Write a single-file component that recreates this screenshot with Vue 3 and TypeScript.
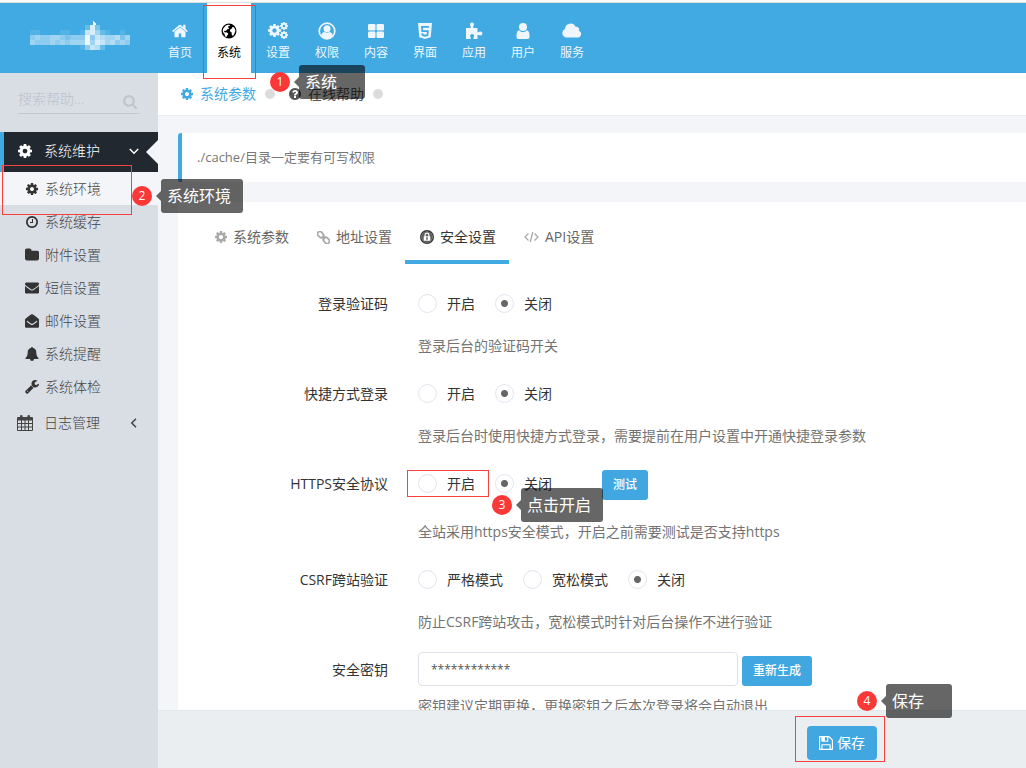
<script setup lang="ts">
import { reactive, ref } from 'vue'

interface NavItem { label: string; icon: string }
interface Choice { value: string; label: string }
interface Field {
  key: string
  label: string
  choices: Choice[]
  help: string
  testable?: boolean
}

const nav: NavItem[] = [
  { label: '首页', icon: 'home' },
  { label: '系统', icon: 'globe' },
  { label: '设置', icon: 'cogs' },
  { label: '权限', icon: 'user-circle' },
  { label: '内容', icon: 'th' },
  { label: '界面', icon: 'html5' },
  { label: '应用', icon: 'puzzle' },
  { label: '用户', icon: 'user' },
  { label: '服务', icon: 'cloud' },
]

const submenu: NavItem[] = [
  { label: '系统环境', icon: 'cog' },
  { label: '系统缓存', icon: 'clock' },
  { label: '附件设置', icon: 'folder' },
  { label: '短信设置', icon: 'envelope' },
  { label: '邮件设置', icon: 'envelope-open' },
  { label: '系统提醒', icon: 'bell' },
  { label: '系统体检', icon: 'wrench' },
]

const tabs: NavItem[] = [
  { label: '系统参数', icon: 'cog' },
  { label: '地址设置', icon: 'link' },
  { label: '安全设置', icon: 'lock' },
  { label: 'API设置', icon: 'code' },
]

const onOff: Choice[] = [
  { value: 'on', label: '开启' },
  { value: 'off', label: '关闭' },
]

const fields: Field[] = [
  { key: 'captcha', label: '登录验证码', choices: onOff, help: '登录后台的验证码开关' },
  { key: 'quick', label: '快捷方式登录', choices: onOff, help: '登录后台时使用快捷方式登录，需要提前在用户设置中开通快捷登录参数' },
  { key: 'https', label: 'HTTPS安全协议', choices: onOff, help: '全站采用https安全模式，开启之前需要测试是否支持https', testable: true },
  {
    key: 'csrf',
    label: 'CSRF跨站验证',
    choices: [
      { value: 'strict', label: '严格模式' },
      { value: 'loose', label: '宽松模式' },
      { value: 'off', label: '关闭' },
    ],
    help: '防止CSRF跨站攻击，宽松模式时针对后台操作不进行验证',
  },
]

const values = reactive<Record<string, string>>({ captcha: 'off', quick: 'off', https: 'off', csrf: 'off' })
const secret = ref('************')
const activeTab = ref(2)

// Opacity of each mosaic cell, in tenths, row by row.
const mosaic: string[] = [
  '00000000000283000000',
  '11000011001785210010',
  '45445543444947655635',
  '54445454555958756454',
  '00000000001476200000',
]
</script>

<template>
  <div class="page">
    <svg class="sprite" aria-hidden="true">
      <symbol id="cog" viewBox="128 128 1536 1536"><path d="M1152 896q0-106-75-181t-181-75-181 75-75 181 75 181 181 75 181-75 75-181zm512-109v222q0 12-8 23t-20 13l-185 28q-19 54-39 91 35 50 107 138 10 12 10 25t-9 23q-27 37-99 108t-94 71q-12 0-26-9l-138-108q-44 23-91 38-16 136-29 186-7 28-36 28h-222q-14 0-24.5-8.5t-11.5-21.5l-28-184q-49-16-90-37l-141 107q-10 9-25 9-14 0-25-11-126-114-165-168-7-10-7-23 0-12 8-23 15-21 51-66.5t54-70.5q-27-50-41-99l-183-27q-13-2-21-12.5t-8-23.500v-222q0-12 8-23t19-13l186-28q14-46 39-92-40-57-107-138-10-12-10-24 0-10 9-23 26-36 98.5-107.5t94.5-71.5q13 0 26 10l138 107q44-23 91-38 16-136 29-186 7-28 36-28h222q14 0 24.5 8.5t11.5 21.500l28 184q49 16 90 37l142-107q9-9 24-9 13 0 25 10 129 119 165 170 7 8 7 22 0 12-8 23-15 21-51 66.500t-54 70.500q26 50 41 98l183 28q13 2 21 12.5t8 23.5z" /></symbol>
      <symbol id="home" viewBox="64 128 1664 1536"><path d="M1472 992v480q0 26-19 45t-45 19h-384v-384h-256v384h-384q-26 0-45-19t-19-45v-480q0-1 .5-3t.5-3l575-474 575 474q1 2 1 6zm223-69l-62 74q-8 9-21 11h-3q-13 0-21-7l-692-577-692 577q-12 8-24 7-13-2-21-11l-62-74q-8-10-7-23.5t11-21.500l719-599q32-26 76-26t76 26l244 204v-195q0-14 9-23t23-9h192q14 0 23 9t9 23v408l219 182q10 8 11 21.500t-7 23.500z" /></symbol>
      <symbol id="globe" viewBox="0 0 18 18"><path fill-rule="evenodd" d="M9 1.500a7.500 7.500 0 1 0 0 15a7.500 7.500 0 0 0 0-15zM5.800 3.600L8 2.700L10 3.100L9.600 4L8.300 4.300L8 5.300L9 6L8.600 7L7.200 7.300L6.300 8.600L5.200 9L4.600 8.500L4 9.500L5 10.400L6.600 10.200L8.200 11.600L7.800 13L6.800 13.800L6.400 15.300L5 14.300L4.600 12L3.200 10.600L2.700 8.500L3.400 6.200zM12 5.300L13.600 5L15 7L15.400 9L14.500 11.200L13.300 13.500L12.300 13.800L11.600 12L11.800 10.600L10.500 9.900L9.900 8.400L10.700 7L12.200 6.500z" /></symbol>
      <symbol id="cogs" viewBox="0 0 20 18">
        <use href="#cog" x="0" y="2" width="13" height="13" />
        <use href="#cog" x="12" y="0" width="8" height="8" />
        <use href="#cog" x="12" y="9" width="8" height="8" />
      </symbol>
      <symbol id="user-circle" viewBox="0 0 18 18"><circle cx="9" cy="9" r="7.800" fill="none" stroke="currentColor" stroke-width="1.700" /><circle cx="9" cy="6.800" r="3.500" /><path d="M3.200 14c.4-3 1.900-4 3.300-4q2.500 1.500 5 0c1.400 0 2.900 1 3.300 4a7.600 7.600 0 0 1-11.600 0z" /></symbol>
      <symbol id="th" viewBox="0 0 18 18"><rect x="1" y="2" width="7.500" height="6.500" rx="1.200" /><rect x="9.500" y="2" width="7.500" height="6.500" rx="1.200" /><rect x="1" y="9.500" width="7.500" height="6.500" rx="1.200" /><rect x="9.500" y="9.500" width="7.500" height="6.500" rx="1.200" /></symbol>
      <symbol id="html5" viewBox="0 0 18 18"><path fill-rule="evenodd" d="M2 1h14l-1.300 14.200L9 17l-5.700-1.800zM5 4l.5 6h5.400l-.2 2.300l-1.700.5l-1.700-.5l-.1-1H5.500l.2 2.400l3.300 1l3.300-1l.5-5.500H7.200L7 5.700h6L13.200 4z" /></symbol>
      <symbol id="puzzle" viewBox="0 0 18 18"><path d="M1 6h4.700V4.500A2.200 2.200 0 0 1 5 2.500a2 2 0 0 1 4 0c0 .9-.7 1.200-.7 2V6h4.200v4.200h1.200c.6 0 .9-.7 1.700-.7a2 2 0 0 1 0 4.100c-.8 0-1.100-.7-1.700-.7h-1.200V17H8.500v-1.500c0-.7.8-1 .8-1.800a2.200 2.200 0 0 0-4.300 0c0 .8.7 1.100.7 1.800V17H1z" /></symbol>
      <symbol id="user" viewBox="0 0 18 18"><circle cx="9" cy="5" r="4" /><path d="M5 8.300Q9 12 13 8.300c2 .5 2.500 3 2.500 6A2.300 2.300 0 0 1 13.200 17H4.800A2.300 2.300 0 0 1 2.500 14.300c0-3 .5-5.500 2.500-6z" /></symbol>
      <symbol id="cloud" viewBox="0 0 20 18"><path d="M5 15.500a4.500 4.500 0 0 1-2-8.600A5.500 5.500 0 0 1 13.500 4.800a3 3 0 0 1 3.500 4a3.500 3.500 0 0 1-1 6.700z" /></symbol>
      <symbol id="search" viewBox="64 128 1664 1664"><path d="M1216 832q0-185-131.500-316.500t-316.500-131.500-316.500 131.500-131.500 316.500 131.500 316.500 316.500 131.500 316.500-131.500 131.500-316.500zm512 832q0 52-38 90t-90 38q-54 0-90-38l-343-342q-179 124-399 124-143 0-273.500-55.500t-225-150-150-225-55.500-273.500 55.500-273.500 150-225 225-150 273.500-55.500 273.500 55.500 225 150 150 225 55.500 273.500q0 220-124 399l343 343q37 37 37 90z" /></symbol>
      <symbol id="question" viewBox="128 128 1536 1536"><path d="M1024 1376v-192q0-14-9-23t-23-9h-192q-14 0-23 9t-9 23v192q0 14 9 23t23 9h192q14 0 23-9t9-23zm256-672q0-88-55.500-163t-138.500-116-170-41q-243 0-371 213-15 24 8 42l132 100q7 6 19 6 16 0 25-12 53-68 86-92 34-24 86-24 48 0 85.500 26t37.500 59q0 38-20 61t-68 45q-63 28-115.500 86.500t-52.500 125.500v36q0 14 9 23t23 9h192q14 0 23-9t9-23q0-19 21.500-49.500t54.500-49.500q32-18 49-28.500t46-35 44.500-48 28-60.500 12.500-81zm384 192q0 209-103 385.500t-279.500 279.500-385.500 103-385.500-103-279.500-279.500-103-385.500 103-385.500 279.500-279.500 385.500-103 385.500 103 279.500 279.500 103 385.500z" /></symbol>
      <symbol id="clock" viewBox="128 128 1536 1536"><path d="M1024 544v448q0 14-9 23t-23 9h-320q-14 0-23-9t-9-23v-64q0-14 9-23t23-9h224v-352q0-14 9-23t23-9h64q14 0 23 9t9 23zm416 352q0-148-73-273t-198-198-273-73-273 73-198 198-73 273 73 273 198 198 273 73 273-73 198-198 73-273zm224 0q0 209-103 385.500t-279.500 279.500-385.500 103-385.500-103-279.500-279.500-103-385.500 103-385.500 279.500-279.500 385.500-103 385.500 103 279.500 279.500 103 385.500z" /></symbol>
      <symbol id="folder" viewBox="64 64 1664 1664"><path d="M1728 608v704q0 92-66 158t-158 66h-1216q-92 0-158-66t-66-158v-960q0-92 66-158t158-66h320q92 0 158 66t66 158v32h672q92 0 158 66t66 158z" /></symbol>
      <symbol id="envelope" viewBox="0 64 1792 1792"><path d="M1792 710v794q0 66-47 113t-113 47h-1472q-66 0-113-47t-47-113v-794q44 49 101 87 362 246 497 345 57 42 92.500 65.500t94.500 48 110 24.500h2q51 0 110-24.500t94.500-48 92.500-65.500q170-123 498-345 57-39 100-87zm0-294q0 79-49 151t-122 123q-376 261-468 325-10 7-42.500 31t-54 38.500-52 32.500-57.500 27-50 9h-2q-23 0-50-9t-57.500-27-52-32.500-54-38.500-42.500-31q-91-64-262-182.500t-205-142.500q-62-42-117-115.500t-55-136.500q0-78 41.500-130t118.500-52h1472q65 0 112.500 47t47.500 113z" /></symbol>
      <symbol id="envelope-open" viewBox="0 0 14 14"><path fill-rule="evenodd" d="M0 5.300Q3 2.500 6 .5Q7-.2 8 .5Q11 2.500 14 5.300V12.500A1.300 1.300 0 0 1 12.700 13.800H1.300A1.300 1.300 0 0 1 0 12.500zM2.300 6.700L1.600 7.700L5.500 10.600Q7 11.600 8.500 10.600L12.400 7.700L11.700 6.700L8 9.400Q7 10 6 9.400z" /></symbol>
      <symbol id="bell" viewBox="0 0 14 14"><path d="M7 0a1 1 0 0 1 1 1.100c2.200.5 3.300 2.200 3.300 4.300c0 3 1 4.500 2.400 5.600q0 1-1 1H9a2 2 0 0 1-4 0H1.300q-1 0-1-1C1.700 9.900 2.700 8.400 2.700 5.400C2.700 3.300 3.800 1.600 6 1.100A1 1 0 0 1 7 0z" /></symbol>
      <symbol id="wrench" viewBox="64 128 1664 1664"><path d="M448 1472q0-26-19-45t-45-19-45 19-19 45 19 45 45 19 45-19 19-45zm644-420l-682 682q-37 37-90 37-52 0-91-37l-106-108q-38-36-38-90 0-53 38-91l681-681q39 98 114.500 173.500t173.500 114.500zm634-435q0 39-23 106-47 134-164.500 217.500t-258.500 83.500q-185 0-316.500-131.500t-131.500-316.500 131.500-316.500 316.500-131.500q58 0 121.500 16.500t107.500 46.500q16 11 16 28t-16 28l-293 169v224l193 107q5-3 79-48.500t135.500-81 70.500-35.500q15 0 23.500 10t8.500 25z" /></symbol>
      <symbol id="calendar" viewBox="0 0 16 17"><path fill-rule="evenodd" d="M1 2H3V1.300a1.300 1.300 0 0 1 2.600 0V2h4.800V1.300a1.300 1.300 0 0 1 2.600 0V2h2a1 1 0 0 1 1 1V15a1 1 0 0 1-1 1H1a1 1 0 0 1-1-1V3a1 1 0 0 1 1-1zM1 5.500V8H4V5.500zM5 5.500V8H7.500V5.500zM8.500 5.500V8H11V5.500zM12 5.500V8H15V5.500zM1 9V11.500H4V9zM5 9V11.500H7.500V9zM8.500 9V11.500H11V9zM12 9V11.500H15V9zM1 12.500V15H4V12.500zM5 12.500V15H7.500V12.500zM8.500 12.500V15H11V12.500zM12 12.500V15H15V12.500z" /></symbol>
      <symbol id="link" viewBox="0 0 14 14"><g fill="none" stroke="currentColor" stroke-width="1.900" transform="rotate(45 7 7)"><rect x="-1" y="4.500" width="7.300" height="5" rx="2.500" /><rect x="7.700" y="4.500" width="7.300" height="5" rx="2.500" /><path d="M4.500 7h5" /></g></symbol>
      <symbol id="lock" viewBox="0 0 14 14"><circle cx="7" cy="7" r="6.300" fill="none" stroke="currentColor" stroke-width="1.400" /><circle cx="7" cy="7" r="5.500" opacity="0.800" /><path fill="none" stroke="#fff" stroke-width="1.200" d="M5.100 6.500V5a1.900 1.900 0 0 1 3.800 0V6.500" /><rect x="3.700" y="6.200" width="6.600" height="4.500" rx="0.500" fill="#fff" /><path stroke="currentColor" stroke-width="1.200" d="M7 7.200V9.700" /></symbol>
      <symbol id="code" viewBox="0 0 15 14"><path fill="none" stroke="currentColor" stroke-width="1.300" d="M4.500 3.500L1 7L4.500 10.500M10.500 3.500L14 7L10.500 10.500M8.800 2L6.200 12" /></symbol>
      <symbol id="save" viewBox="128 128 1536 1536"><path d="M512 1536h768v-384h-768v384zm896 0h128v-896q0-14-10-38.500t-20-34.500l-281-281q-10-10-34-20t-39-10v416q0 40-28 68t-68 28h-576q-40 0-68-28t-28-68v-416h-128v1280h128v-416q0-40 28-68t68-28h832q40 0 68 28t28 68v416zm-384-928v-320q0-13-9.500-22.500t-22.500-9.500h-192q-13 0-22.500 9.500t-9.500 22.500v320q0 13 9.500 22.500t22.500 9.500h192q13 0 22.500-9.500t9.500-22.500zm640 32v928q0 40-28 68t-68 28h-1344q-40 0-68-28t-28-68v-1344q0-40 28-68t68-28h928q40 0 88 20t76 48l280 280q28 28 48 76t20 88z" /></symbol>
      <symbol id="chevron" viewBox="0 0 10 10"><path fill="none" stroke="currentColor" stroke-width="1.500" d="M0.800 3L5 7.200L9.200 3" /></symbol>
    </svg>

    <header class="header">
      <a class="logo" href="#" aria-label="logo">
        <svg viewBox="0 -5 100 30" width="100" height="30" shape-rendering="crispEdges">
          <path fill="#fff" opacity="0.900" d="M63 0V-4L66 -2V0z" />
          <template v-for="(row, y) in mosaic" :key="y">
            <rect v-for="(cell, x) in row.split('')" :key="x" :x="x * 5" :y="y * 5" width="5" height="5" fill="#fff" :opacity="Number(cell) / 10" />
          </template>
        </svg>
      </a>
      <nav class="nav">
        <a v-for="item in nav" :key="item.label" href="#" class="nav-item" :class="{ active: item.icon === 'globe' }">
          <svg class="nav-icon" :class="item.icon"><use :href="'#' + item.icon" /></svg>
          <span>{{ item.label }}</span>
          <template v-if="item.icon === 'globe'">
            <span class="frame frame-nav"></span>
            <span class="callout callout-nav"><b class="badge">1</b><span class="tip">系统</span></span>
          </template>
        </a>
      </nav>
    </header>

    <div class="body">
      <aside class="sidebar">
        <form class="search" @submit.prevent>
          <input type="text" placeholder="搜索帮助..." aria-label="搜索帮助" />
          <button type="submit" aria-label="搜索"><svg><use href="#search" /></svg></button>
        </form>
        <a class="group open" href="#">
          <svg class="group-icon"><use href="#cog" /></svg>
          <span>系统维护</span>
          <svg class="chevron"><use href="#chevron" /></svg>
        </a>
        <ul class="submenu">
          <li v-for="(item, i) in submenu" :key="item.label" :class="{ current: i === 0 }">
            <a href="#"><svg class="sub-icon" :class="item.icon"><use :href="'#' + item.icon" /></svg><span>{{ item.label }}</span></a>
            <template v-if="i === 0">
              <span class="frame frame-menu"></span>
              <span class="callout callout-menu"><b class="badge">2</b><span class="tip">系统环境</span></span>
            </template>
          </li>
        </ul>
        <a class="group" href="#">
          <svg class="group-icon calendar"><use href="#calendar" /></svg>
          <span>日志管理</span>
          <svg class="chevron left"><use href="#chevron" /></svg>
        </a>
      </aside>

      <main class="main">
        <nav class="crumbs">
          <a href="#" class="crumb active"><svg><use href="#cog" /></svg>系统参数</a>
          <i class="dot"></i>
          <a href="#" class="crumb"><svg><use href="#question" /></svg>在线帮助</a>
          <i class="dot"></i>
        </nav>
        <div class="content">
          <p class="notice">./cache/目录一定要有可写权限</p>
          <section class="card">
            <div class="tabs" role="tablist">
              <button
                v-for="(tab, i) in tabs"
                :key="tab.label"
                type="button"
                role="tab"
                class="tab"
                :class="[tab.icon, { active: activeTab === i }]"
                @click="activeTab = i"
              >
                <svg><use :href="'#' + tab.icon" /></svg>{{ tab.label }}
              </button>
            </div>
            <form class="form" @submit.prevent>
              <div v-for="field in fields" :key="field.key" class="row">
                <span :id="'label-' + field.key" class="label">{{ field.label }}</span>
                <div class="field">
                  <div class="control" :class="{ tall: field.testable }" role="radiogroup" :aria-labelledby="'label-' + field.key">
                    <label v-for="choice in field.choices" :key="choice.value" class="choice">
                      <input v-model="values[field.key]" type="radio" :name="field.key" :value="choice.value" />
                      <span>{{ choice.label }}</span>
                      <template v-if="field.testable && choice.value === 'on'">
                        <span class="frame frame-radio"></span>
                        <span class="callout callout-radio"><b class="badge">3</b><span class="tip">点击开启</span></span>
                      </template>
                    </label>
                    <button v-if="field.testable" type="button" class="small-button test">测试</button>
                  </div>
                  <p class="help">{{ field.help }}</p>
                </div>
              </div>
              <div class="row">
                <label class="label" for="secret">安全密钥</label>
                <div class="field">
                  <div class="control secret">
                    <input id="secret" v-model="secret" type="text" class="text-input" />
                    <button type="button" class="small-button">重新生成</button>
                  </div>
                  <p class="help">密钥建议定期更换，更换密钥之后本次登录将会自动退出</p>
                </div>
              </div>
            </form>
          </section>
        </div>
        <footer class="footer">
          <div class="save-wrap">
            <button type="submit" class="save"><svg><use href="#save" /></svg>保存</button>
            <span class="frame frame-save"></span>
            <span class="callout callout-save"><b class="badge">4</b><span class="tip">保存</span></span>
          </div>
        </footer>
      </main>
    </div>
  </div>
</template>

<style>
body {
  margin: 0;
  overflow: hidden;
}
</style>

<style scoped>
* {
  box-sizing: border-box;
}
.page {
  display: flex;
  flex-direction: column;
  height: 100vh;
  border-top: 2px solid #fff;
  background: #f4f5f8;
  color: #333;
  font: 14px/20px "Open Sans", "Noto Sans CJK SC", sans-serif;
}
.page svg {
  display: block;
  flex: none;
  fill: currentColor;
}
.page .sprite {
  position: absolute;
  width: 0;
  height: 0;
}
a {
  color: inherit;
  text-decoration: none;
}
button,
input {
  margin: 0;
  font: inherit;
}
p {
  margin: 0;
}
.header {
  display: flex;
  position: relative;
  z-index: 3;
  flex: none;
  height: 71px;
  border-top: 1px solid #dcdcdc;
  background: #41aae3;
}
.logo {
  display: flex;
  flex: none;
  width: 158px;
  padding: 17px 0 0 30px;
}
.nav {
  display: flex;
  gap: 5px;
}
.nav-item {
  display: flex;
  position: relative;
  flex-direction: column;
  align-items: center;
  gap: 3px;
  width: 44px;
  padding-top: 19px;
  color: #f0f6fd;
  font-size: 12px;
}
.nav-item.active {
  background: #fff;
  color: #000;
}
.nav-icon {
  width: 20px;
  height: 18px;
}
.nav-icon.home {
  width: 16px;
}
.body {
  display: flex;
  flex: 1;
  min-height: 0;
}
.sidebar {
  position: relative;
  z-index: 2;
  flex: none;
  width: 158px;
  background: #d9dde4;
}
.search {
  display: flex;
  align-items: center;
  margin: 13px 18px 18px;
  height: 28px;
  border-bottom: 1px solid #c3c9d2;
}
.search input {
  flex: 1;
  min-width: 0;
  height: 27px;
  padding: 0 0 2px;
  border: 0;
  outline: 0;
  background: none;
  color: #333;
  font-weight: 300;
}
.search input::placeholder {
  color: #bac1cb;
}
.search button {
  padding: 4px 3px 0 0;
  border: 0;
  background: none;
  color: #bfc6cf;
}
.search svg {
  width: 14px;
  height: 14px;
}
.group {
  display: flex;
  position: relative;
  align-items: center;
  height: 40px;
  padding: 0 19px 0 17px;
  color: #444;
  font-weight: 300;
}
.group span {
  flex: 1;
}
.group-icon {
  width: 14px;
  height: 14px;
  margin-right: 12px;
}
.group-icon.calendar {
  width: 16px;
  height: 17px;
  margin-right: 11px;
}
.group.open {
  padding: 0 19px 2px 14px;
  border-left: 4px solid #41aae3;
  background: #22282f;
  color: #fff;
}
.group.open::after {
  position: absolute;
  top: 8px;
  right: 0;
  border: 12px solid transparent;
  border-right-color: #f4f5f8;
  border-left-width: 0;
  content: "";
}
.chevron {
  width: 10px;
  height: 10px;
}
.chevron.left {
  transform: rotate(90deg);
}
.submenu {
  margin: 0;
  padding: 0;
  list-style: none;
  color: #444;
  font-weight: 300;
}
.submenu li {
  position: relative;
}
.submenu li.current {
  background: #f4f5f8;
}
.submenu a {
  display: flex;
  align-items: center;
  gap: 6px;
  height: 33px;
  padding-left: 25px;
}
.sub-icon {
  width: 14px;
  height: 14px;
  color: #333;
}
.sub-icon.cog,
.sub-icon.clock {
  width: 12px;
  height: 12px;
  margin: 0 1px;
}
.main {
  display: flex;
  flex: 1;
  flex-direction: column;
  min-width: 0;
}
.crumbs {
  display: flex;
  flex: none;
  align-items: center;
  height: 43px;
  padding-left: 23px;
  border-bottom: 1px solid #e7ecf1;
  background: #fff;
}
.crumb {
  display: flex;
  align-items: center;
  gap: 7px;
  color: #555;
}
.crumb svg {
  width: 12px;
  height: 12px;
}
.crumb.active {
  color: #41aae3;
}
.dot {
  width: 10px;
  height: 10px;
  margin: 0 14px 0 9px;
  border-radius: 50%;
  background: #dcdcdc;
}
.content {
  flex: 1;
  min-height: 0;
  overflow: hidden;
  padding: 17px 0 0 20px;
}
.notice {
  padding: 14px 15px 15px;
  border-left: 4px solid #41aae3;
  border-radius: 3px 0 0 3px;
  background: #fff;
  color: #777;
  font-size: 13px;
}
.card {
  margin-top: 20px;
  padding: 12px 0 20px;
  background: #fff;
}
.tabs {
  display: flex;
  padding-left: 22px;
}
.tab {
  display: flex;
  align-items: center;
  gap: 6px;
  height: 50px;
  padding: 0 13px 0 15px;
  border: 0;
  border-bottom: 4px solid transparent;
  background: none;
  color: #666;
}
.tab svg {
  width: 12px;
  height: 12px;
  color: #aaa;
}
.tab.link svg {
  width: 13px;
  height: 13px;
}
.tab.lock svg {
  width: 14px;
  height: 14px;
}
.tab.code svg {
  width: 15px;
  height: 14px;
}
.tab.active {
  border-bottom-color: #41aae3;
  color: #333;
}
.tab.active svg {
  color: #333;
}
.form {
  padding-top: 23px;
}
.row {
  display: grid;
  grid-template-columns: 210px 1fr;
  gap: 30px;
  margin-bottom: 21px;
}
.label {
  line-height: 33px;
  text-align: right;
}
.control {
  display: flex;
  align-items: flex-start;
  gap: 20px;
  height: 34px;
  margin-bottom: 15px;
}
.control.tall {
  height: 40px;
}
.control.secret {
  height: 33px;
  align-items: flex-end;
  gap: 4px;
  margin-bottom: 10px;
}
.choice {
  display: flex;
  position: relative;
  align-items: center;
  gap: 10px;
  height: 33px;
}
.choice input {
  width: 19px;
  height: 19px;
  border: 1px solid #e4e4f0;
  border-radius: 50%;
  appearance: none;
  background: #fff;
}
.choice input:checked {
  background: radial-gradient(circle, #666 0 3px, #fff 4px);
}
.small-button {
  height: 30px;
  padding: 0 11px;
  border: 0;
  border-radius: 3px;
  background: #41a7e1;
  color: #fff;
  font-size: 12px;
  font-weight: 500;
}
.small-button.test {
  margin: 3px 0 0 30px;
}
.help {
  color: #737373;
}
.text-input {
  width: 320px;
  height: 34px;
  padding: 0 12px;
  border: 1px solid #e1e1ee;
  border-radius: 4px;
  background: #fff;
  color: #555;
  font-size: 12px;
}
.footer {
  display: flex;
  flex: none;
  align-items: flex-start;
  position: relative;
  height: 58px;
  padding: 15px 0 0 649px;
  border-top: 1px solid #e3e8ec;
  background: #ebeef0;
}
.save-wrap {
  position: relative;
}
.save {
  display: flex;
  align-items: center;
  gap: 4px;
  height: 34px;
  padding: 0 12px;
  border: 0;
  border-radius: 4px;
  background: #41a7e1;
  color: #fff;
}
.save svg {
  width: 14px;
  height: 14px;
}
.frame {
  position: absolute;
  border: 1px solid #f8403f;
  pointer-events: none;
}
.frame-nav {
  inset: 2px -5px -6px -4px;
}
.frame-menu {
  inset: -7px 26px -10px 2px;
}
.frame-radio {
  inset: 3px -14px 3px -11px;
}
.frame-save {
  inset: -10px -8px -2px -12px;
}
.callout {
  display: flex;
  position: absolute;
  align-items: center;
  gap: 9px;
}
.callout-nav {
  top: 62px;
  left: 63px;
}
.callout-menu {
  top: 7px;
  left: 132px;
}
.callout-radio {
  z-index: 1;
  top: 21px;
  left: 74px;
}
.callout-save {
  top: -42px;
  left: 50px;
}
.badge {
  width: 20px;
  height: 20px;
  border-radius: 50%;
  background: #fb3838;
  color: #fff;
  font-size: 12px;
  font-weight: 400;
  line-height: 20px;
  text-align: center;
}
.tip {
  position: relative;
  min-width: 66px;
  height: 34px;
  padding: 0 12px 0 6px;
  border-radius: 3px;
  background: rgba(0, 0, 0, 0.6);
  color: #fff;
  font-size: 16px;
  font-weight: 400;
  line-height: 34px;
  white-space: nowrap;
}
.tip::before {
  position: absolute;
  top: 12px;
  left: -5px;
  border: 5px solid transparent;
  border-right-color: rgba(0, 0, 0, 0.6);
  border-left-width: 0;
  content: "";
}
</style>
